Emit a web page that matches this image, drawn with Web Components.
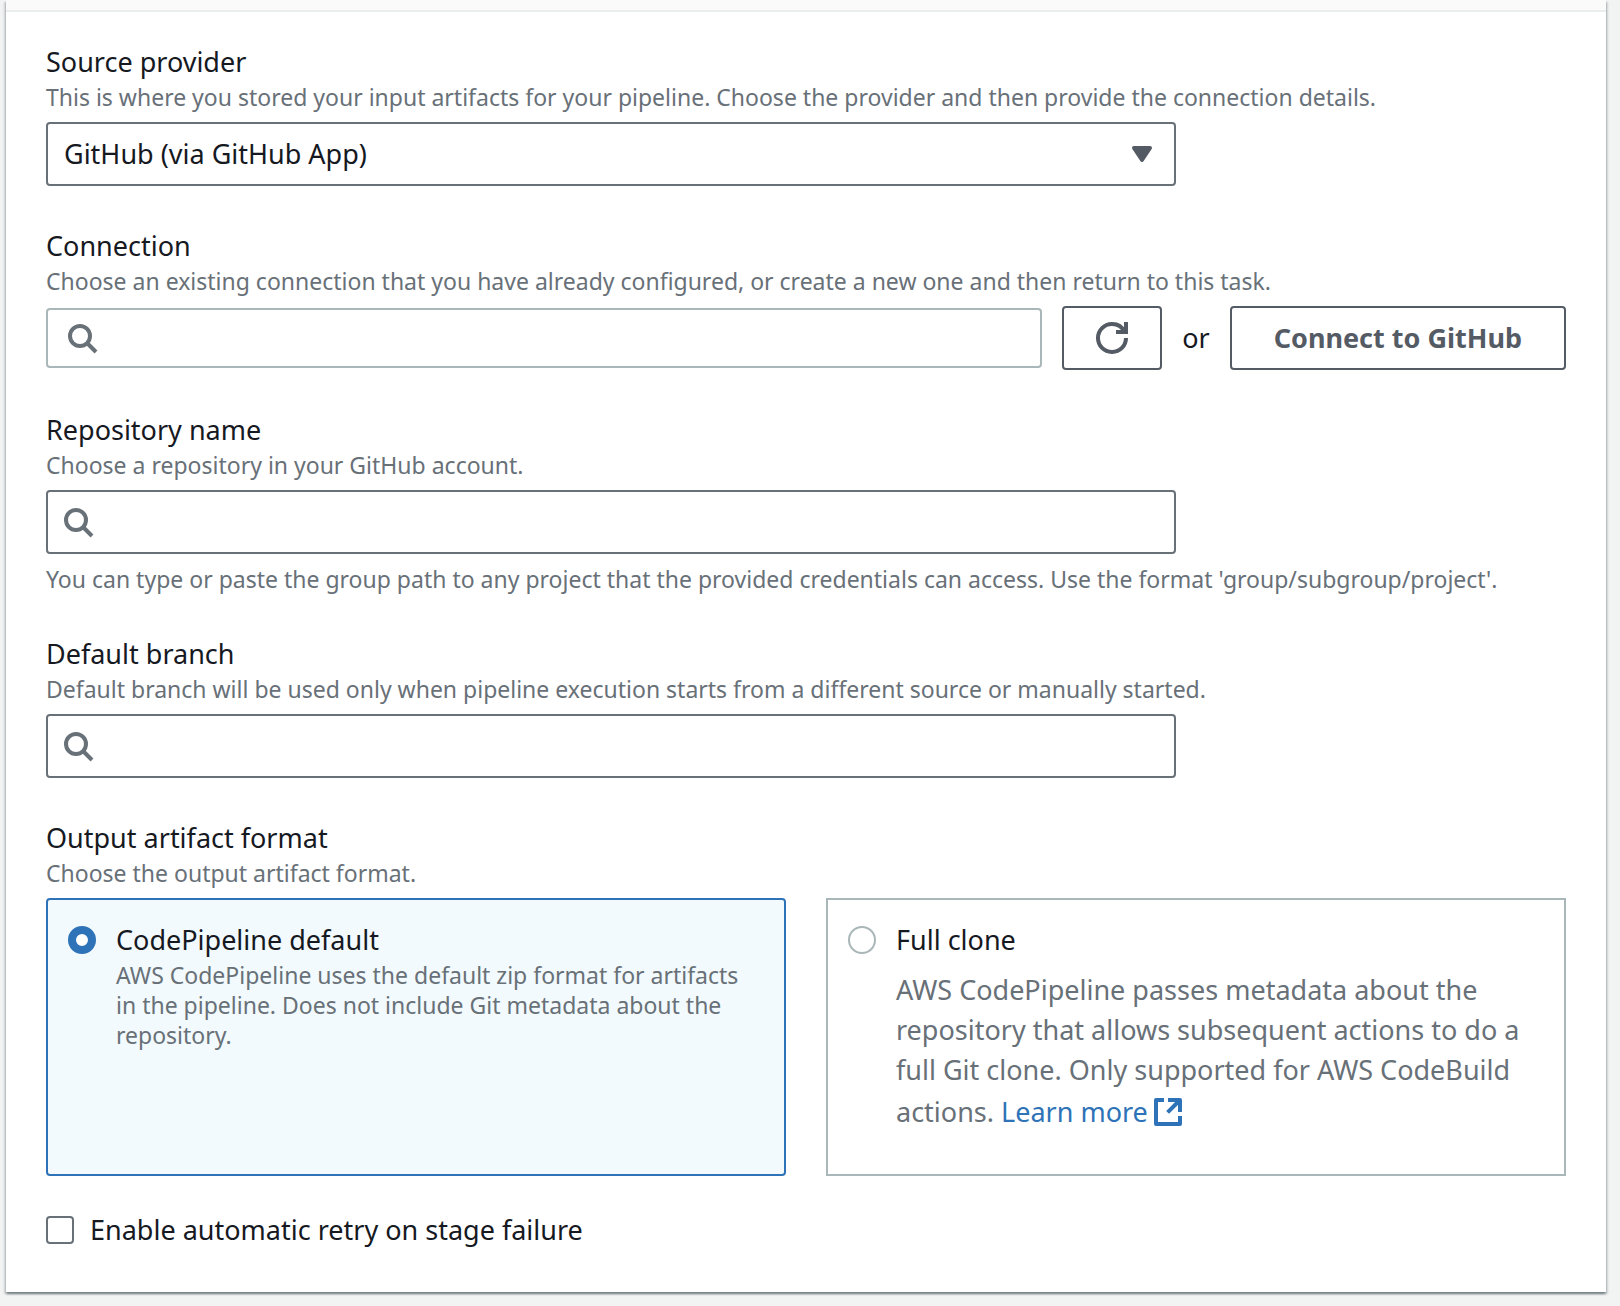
<!DOCTYPE html>
<html lang="en">
<head>
<meta charset="utf-8">
<meta name="viewport" content="width=device-width, initial-scale=1">
<title>Add source stage</title>
<style>
  html { background: #f2f3f3; }
  body {
    margin: 0;
    padding: 0 14px 14px 6px;
    font: 400 27px/40px "Noto Sans", "Open Sans", sans-serif;
    color: #16191f;
    --hint: #687078;
    --line: #687078;
    --line-soft: #aab7b8;
    --action: #545b64;
    --accent: #2e73b8;
    --hint-size: 23px;
  }
</style>
</head>
<body>
<source-panel>
  <select-field label="Source provider" hint="This is where you stored your input artifacts for your pipeline. Choose the provider and then provide the connection details." value="GitHub (via GitHub App)"></select-field>
  <search-field soft label="Connection" hint="Choose an existing connection that you have already configured, or create a new one and then return to this task.">
    <action-button slot="actions" icon="refresh" name="Refresh connections"></action-button>
    <span slot="actions">or</span>
    <action-button slot="actions">Connect to GitHub</action-button>
  </search-field>
  <search-field label="Repository name" hint="Choose a repository in your GitHub account." note="You can type or paste the group path to any project that the provided credentials can access. Use the format 'group/subgroup/project'."></search-field>
  <search-field label="Default branch" hint="Default branch will be used only when pipeline execution starts from a different source or manually started."></search-field>
  <radio-tiles label="Output artifact format" hint="Choose the output artifact format." first="CodePipeline default" second="Full clone">
    <small-text slot="first">AWS CodePipeline uses the default zip format for artifacts in the pipeline. Does not include Git metadata about the repository.</small-text>
    <body-text slot="second">AWS CodePipeline passes metadata about the repository that allows subsequent actions to do a full Git clone. Only supported for AWS CodeBuild actions. <external-link href="#learn-more">Learn more</external-link></body-text>
  </radio-tiles>
  <check-field slot="footer">Enable automatic retry on stage failure</check-field>
</source-panel>

<script>
const ICONS = {
  search: '<circle cx="7" cy="7" r="5"/><path d="M15 15l-4.5-4.5"/>',
  refresh: '<path d="M10 5h5V0"/><path d="M15 8a6.957 6.957 0 01-7 7 6.957 6.957 0 01-7-7 6.957 6.957 0 017-7 6.87 6.87 0 016.3 4"/>',
  caret: '<path d="M4 5h8l-4 6z" fill="currentColor" stroke-linejoin="round"/>',
  external: '<path d="M8 2h6v6M7.8 8.2L14 2M14 10v4H2V2h4" stroke-linejoin="round"/>'
};
const icon = name => `<svg class="icon" viewBox="0 0 16 16" fill="none" stroke="currentColor" stroke-width="2" aria-hidden="true">${ICONS[name]}</svg>`;

const BASE = `
  *, *::before, *::after { box-sizing: border-box; }
  :host { display: block; }
  .icon { width: 32px; height: 32px; flex: none; display: block; }
  .label { display: block; }
  .hint, .note { color: var(--hint); font-size: var(--hint-size); line-height: 30px; margin: 0; }
  .hint { margin-bottom: 10px; }
  .note { margin-top: 10px; }
  .control { width: calc(75% - 10px); }
  input, select, button { font: inherit; color: inherit; margin: 0; }
`;

class BaseElement extends HTMLElement {
  connectedCallback() {
    if (this.shadowRoot) return;
    const root = this.attachShadow({ mode: 'open' });
    root.innerHTML = `<style>${BASE}${this.styles()}</style>${this.markup()}`;
  }
  get(name) { return this.getAttribute(name) || ''; }
  styles() { return ''; }
  markup() { return '<slot></slot>'; }
}

customElements.define('source-panel', class extends BaseElement {
  styles() { return `
    :host {
      background: #fff;
      box-shadow: 0 2px 2px rgba(0,28,36,.4), 2px 2px 2px rgba(0,28,36,.12), -2px 2px 2px rgba(0,28,36,.12);
    }
    header { height: 12px; background: #fafafa; border-bottom: 2px solid #eaeded; }
    .body { padding: 30px 40px 42px; display: flex; flex-direction: column; gap: 34px; }
    .fields { display: flex; flex-direction: column; gap: 40px; }`; }
  markup() { return `<header></header><div class="body"><div class="fields"><slot></slot></div><slot name="footer"></slot></div>`; }
});

customElements.define('select-field', class extends BaseElement {
  styles() { return `
    .control { display: grid; align-items: center; }
    select {
      grid-area: 1 / 1; appearance: none; width: 100%; height: 64px; padding: 0 60px 0 16px;
      background: #fff; border: 2px solid var(--line); border-radius: 4px;
    }
    .icon { grid-area: 1 / 1; justify-self: end; margin-right: 18px; color: var(--action); pointer-events: none; }`; }
  markup() { return `
    <label class="label" for="control">${this.get('label')}</label>
    <p class="hint" id="hint">${this.get('hint')}</p>
    <div class="control">
      <select id="control" aria-describedby="hint"><option>${this.get('value')}</option></select>${icon('caret')}
    </div>`; }
});

customElements.define('search-field', class extends BaseElement {
  styles() { return `
    .row { display: flex; align-items: center; gap: 20px; }
    .box {
      display: flex; align-items: center; gap: 12px; height: 64px; padding: 0 14px; color: var(--hint);
      background: #fff; border: 2px solid var(--line); border-radius: 4px;
    }
    input { flex: 1; min-width: 0; border: 0; padding: 0; outline: 0; background: none; color: #16191f; }
    :host([soft]) .box { flex: 1; min-width: 0; height: 60px; padding: 0 18px; border-color: var(--line-soft); }`; }
  markup() { return `
    <label class="label" for="control">${this.get('label')}</label>
    <p class="hint" id="hint">${this.get('hint')}</p>
    <div class="row">
      <div class="box control">${icon('search')}<input id="control" type="text" aria-describedby="hint"></div>
      <slot name="actions"></slot>
    </div>
    ${this.get('note') ? `<p class="note">${this.get('note')}</p>` : ''}`; }
});

customElements.define('action-button', class extends BaseElement {
  styles() { return `
    :host { flex: none; }
    button {
      display: flex; align-items: center; justify-content: center; height: 64px; padding: 0 42px;
      font-weight: 700; color: var(--action); background: #fff;
      border: 2px solid var(--action); border-radius: 4px; cursor: pointer;
    }
    :host([icon]) button { padding: 0 32px; }`; }
  markup() {
    return this.get('icon')
      ? `<button type="button" aria-label="${this.get('name')}">${icon(this.get('icon'))}</button>`
      : '<button type="button"><slot></slot></button>';
  }
});

customElements.define('radio-tiles', class extends BaseElement {
  styles() { return `
    .tiles { display: grid; grid-template-columns: 1fr 1fr; gap: 40px; }
    .tile {
      display: grid; grid-template-columns: 28px 1fr; column-gap: 20px; align-content: start;
      min-height: 278px; padding: 20px 30px 20px 20px; background: #fff; border: 2px solid var(--line-soft);
    }
    .tile:has(:checked) { background: #f2fafd; border-color: var(--accent); border-radius: 4px; }
    .tile slot { display: block; grid-column: 2; }
    input {
      appearance: none; width: 28px; height: 28px; align-self: center; background: #fff;
      border: 2px solid var(--line-soft); border-radius: 50%;
    }
    input:checked { border: 8px solid var(--accent); }`; }
  tile(id, checked) { return `
    <div class="tile">
      <input type="radio" name="format" id="${id}" ${checked ? 'checked' : ''}>
      <label for="${id}">${this.get(id)}</label>
      <slot name="${id}"></slot>
    </div>`; }
  markup() { return `
    <span class="label" id="title">${this.get('label')}</span>
    <p class="hint">${this.get('hint')}</p>
    <div class="tiles" role="radiogroup" aria-labelledby="title">${this.tile('first', true)}${this.tile('second', false)}</div>`; }
});

customElements.define('small-text', class extends BaseElement {
  styles() { return ':host { color: var(--hint); font-size: var(--hint-size); line-height: 30px; }'; }
});

customElements.define('body-text', class extends BaseElement {
  styles() { return ':host { color: var(--hint); margin-top: 10px; }'; }
});

customElements.define('external-link', class extends BaseElement {
  styles() { return `
    :host { display: inline; }
    a { color: var(--accent); text-decoration: none; white-space: nowrap; }
    .icon { display: inline-block; vertical-align: -6px; margin: 6px 0 0 4px; }`; }
  markup() { return `<a href="${this.get('href')}"><slot></slot>${icon('external')}</a>`; }
});

customElements.define('check-field', class extends BaseElement {
  styles() { return `
    label { display: flex; align-items: center; gap: 16px; }
    input {
      appearance: none; flex: none; width: 28px; height: 28px; background: #fff;
      border: 2px solid var(--line); border-radius: 4px;
    }`; }
  markup() { return '<label><input type="checkbox"><span><slot></slot></span></label>'; }
});
</script>
</body>
</html>
